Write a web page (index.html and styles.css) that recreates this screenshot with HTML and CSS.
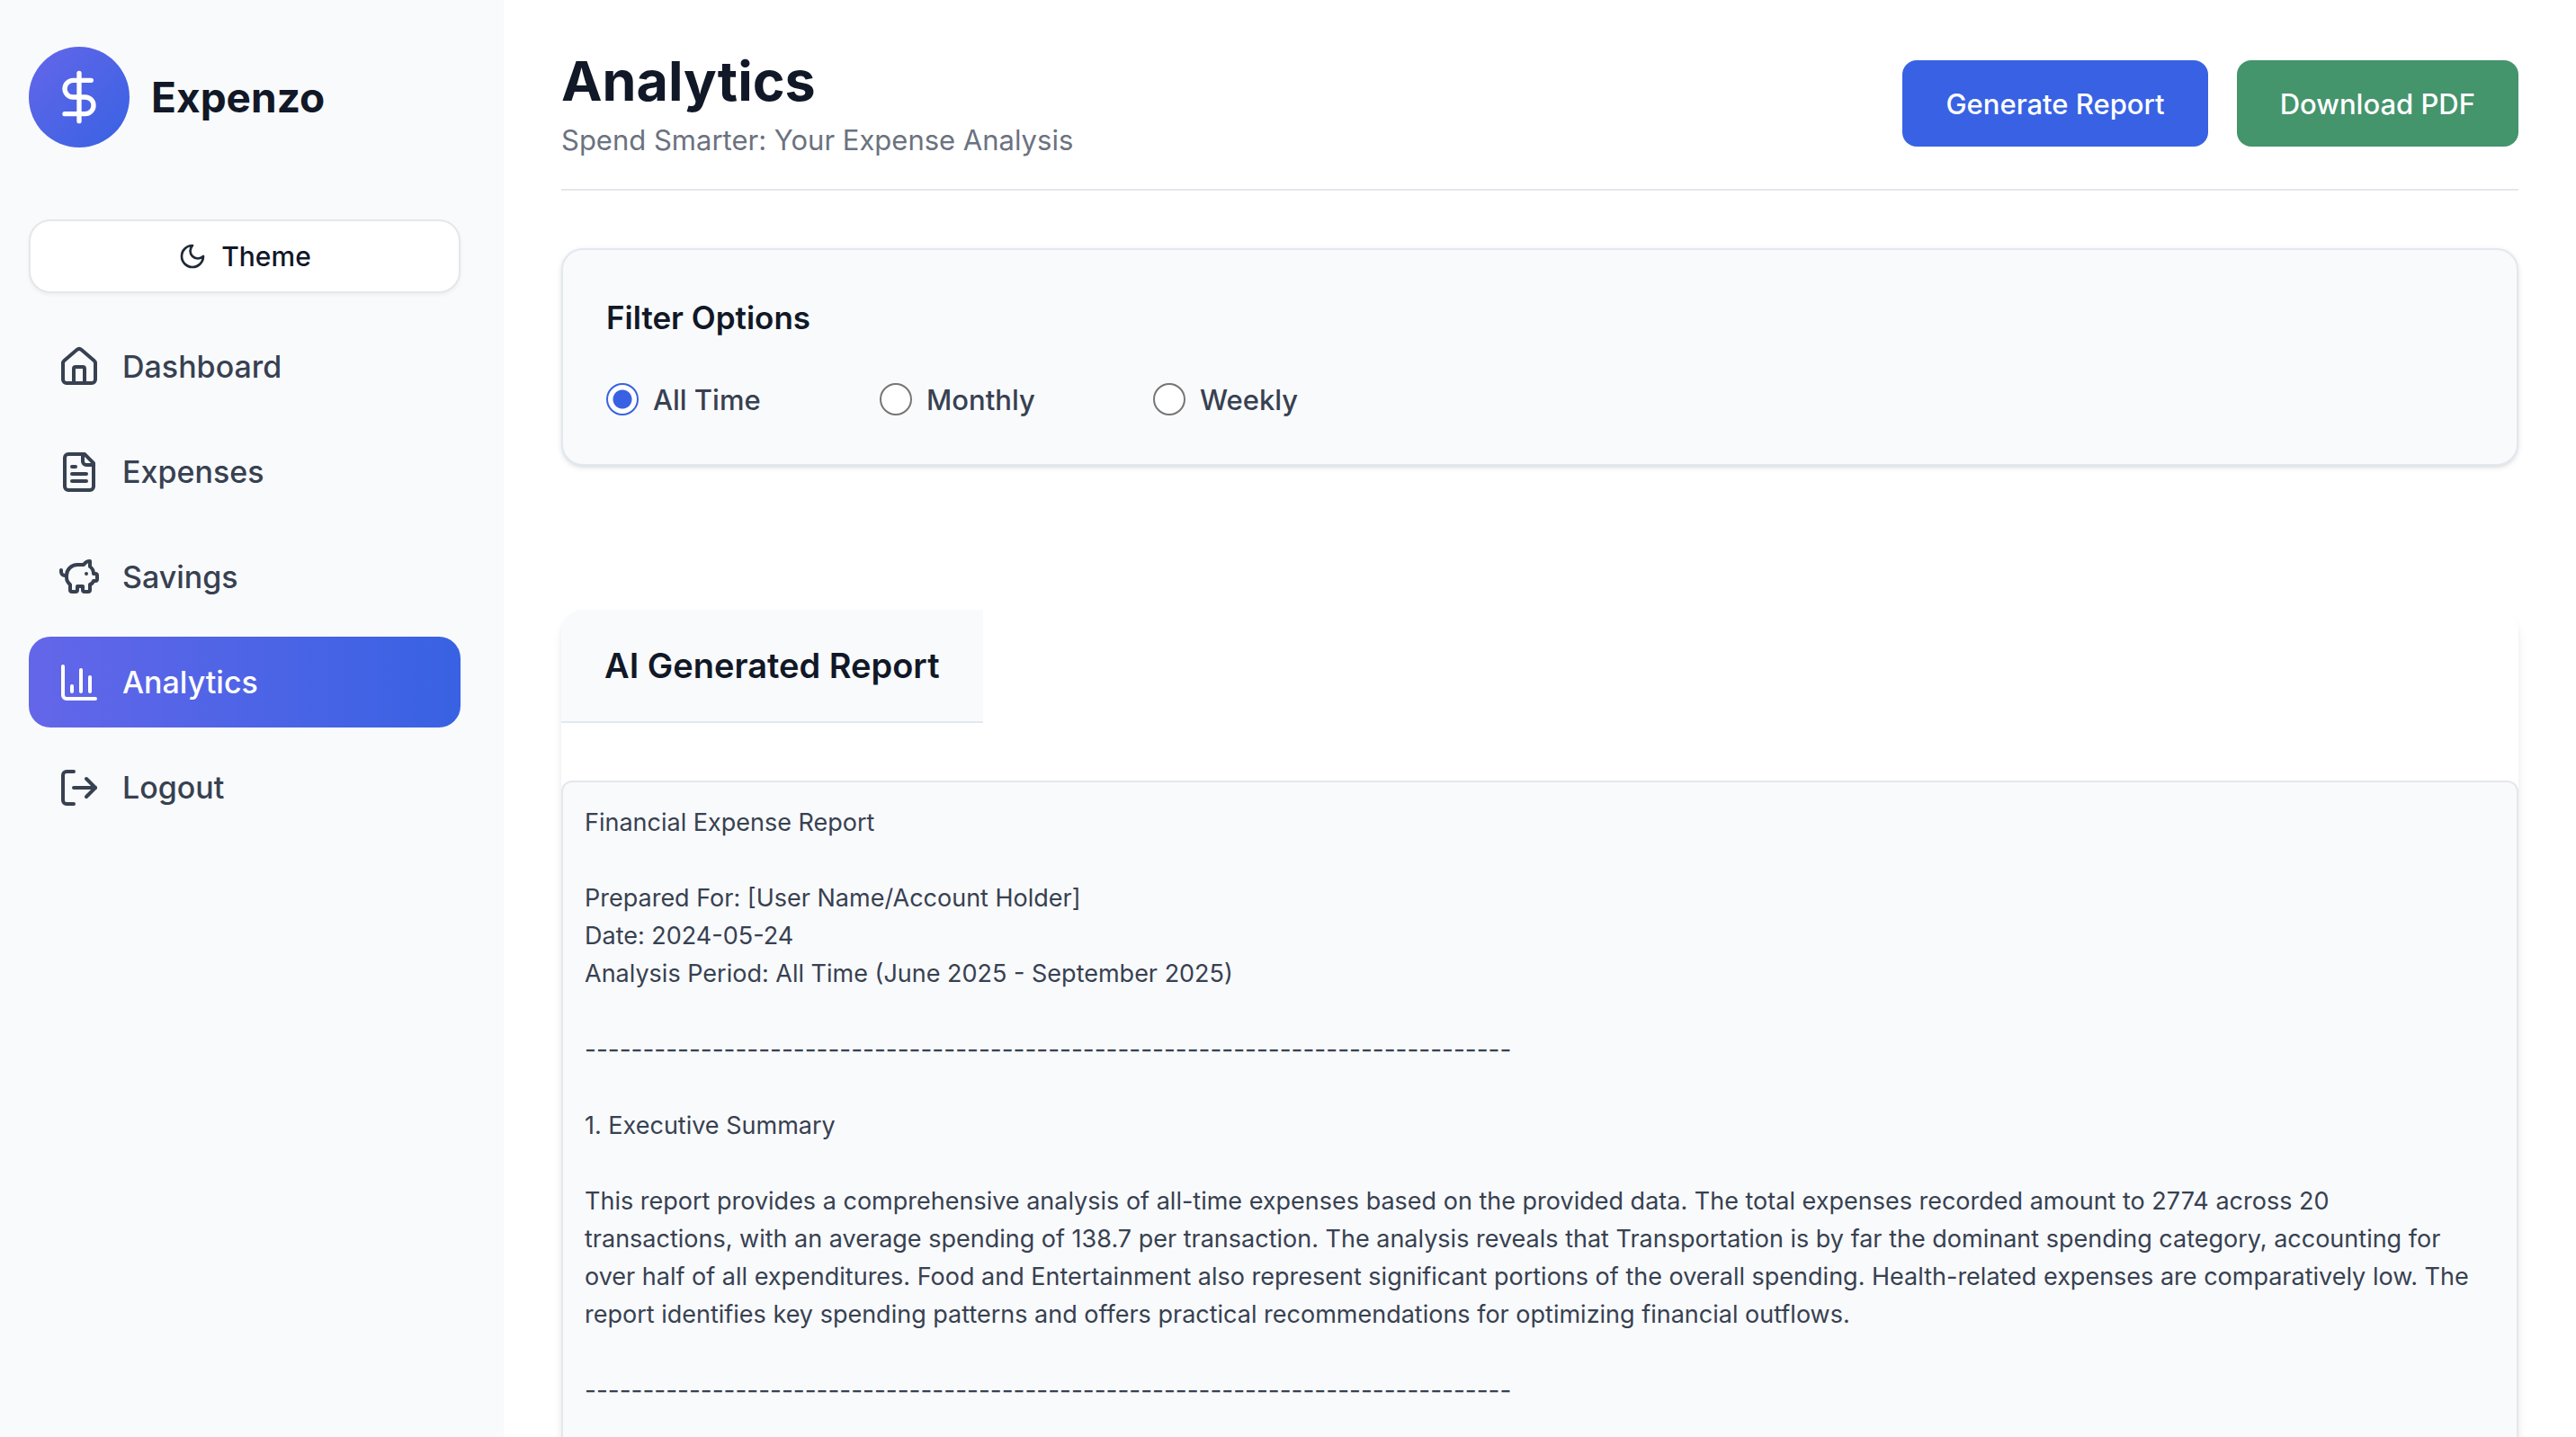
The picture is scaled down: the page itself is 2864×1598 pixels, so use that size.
FILE: index.html
```html
<!DOCTYPE html>
<html lang="en">
<head>
  <meta charset="utf-8">
  <meta name="viewport" content="width=device-width, initial-scale=1">
  <title>Expenzo</title>
  <link rel="stylesheet" href="styles.css">
</head>
<body>
  <div class="app">
    <aside class="sidebar">
      <div class="brand">
        <span class="brand-mark">
          <svg class="icon icon-lg" viewBox="0 0 24 24" aria-hidden="true"><path d="M12 2v20"/><path d="M17 5H9.5a3.5 3.5 0 0 0 0 7h5a3.5 3.5 0 0 1 0 7H6"/></svg>
        </span>
        <span class="brand-name">Expenzo</span>
      </div>

      <button class="theme-button" type="button">
        <svg class="icon icon-sm" viewBox="0 0 24 24" aria-hidden="true"><path d="M12 3a6 6 0 0 0 9 9 9 9 0 1 1-9-9Z"/></svg>
        <span>Theme</span>
      </button>

      <nav class="nav">
        <a class="nav-link" href="#dashboard">
          <svg class="icon" viewBox="0 0 24 24" aria-hidden="true"><path d="M15 21v-8a1 1 0 0 0-1-1h-4a1 1 0 0 0-1 1v8"/><path d="M3 10a2 2 0 0 1 .709-1.528l7-5.999a2 2 0 0 1 2.582 0l7 5.999A2 2 0 0 1 21 10v9a2 2 0 0 1-2 2H5a2 2 0 0 1-2-2z"/></svg>
          <span>Dashboard</span>
        </a>
        <a class="nav-link" href="#expenses">
          <svg class="icon" viewBox="0 0 24 24" aria-hidden="true"><path d="M15 2H6a2 2 0 0 0-2 2v16a2 2 0 0 0 2 2h12a2 2 0 0 0 2-2V7Z"/><path d="M14 2v4a2 2 0 0 0 2 2h4"/><path d="M10 9H8"/><path d="M16 13H8"/><path d="M16 17H8"/></svg>
          <span>Expenses</span>
        </a>
        <a class="nav-link" href="#savings">
          <svg class="icon" viewBox="0 0 24 24" aria-hidden="true"><path d="M11 17h3v2a1 1 0 0 0 1 1h2a1 1 0 0 0 1-1v-3a3.16 3.16 0 0 0 2-2h1a1 1 0 0 0 1-1v-2a1 1 0 0 0-1-1h-1a5 5 0 0 0-2-4V3a4 4 0 0 0-3.2 1.6l-.3.4H11a6 6 0 0 0-6 6v1a5 5 0 0 0 2 4v3a1 1 0 0 0 1 1h2a1 1 0 0 0 1-1z"/><path d="M16 10h.01"/><path d="M2 8v1a2 2 0 0 0 2 2h1"/></svg>
          <span>Savings</span>
        </a>
        <a class="nav-link active" href="#analytics" aria-current="page">
          <svg class="icon" viewBox="0 0 24 24" aria-hidden="true"><path d="M3 3v16a2 2 0 0 0 2 2h16"/><path d="M18 17V9"/><path d="M13 17V5"/><path d="M8 17v-3"/></svg>
          <span>Analytics</span>
        </a>
        <a class="nav-link" href="#logout">
          <svg class="icon" viewBox="0 0 24 24" aria-hidden="true"><path d="M9 21H5a2 2 0 0 1-2-2V5a2 2 0 0 1 2-2h4"/><path d="m16 17 5-5-5-5"/><path d="M21 12H9"/></svg>
          <span>Logout</span>
        </a>
      </nav>
    </aside>

    <main class="main">
      <header class="page-header">
        <div>
          <h1 class="page-title">Analytics</h1>
          <p class="page-subtitle">Spend Smarter: Your Expense Analysis</p>
        </div>
        <div class="actions">
          <button class="button button-primary" type="button">Generate Report</button>
          <button class="button button-success" type="button">Download PDF</button>
        </div>
      </header>

      <section class="filters">
        <h2 class="filters-title">Filter Options</h2>
        <div class="filters-row">
          <label class="option"><input class="radio" type="radio" name="range" value="all" checked><span>All Time</span></label>
          <label class="option"><input class="radio" type="radio" name="range" value="monthly"><span>Monthly</span></label>
          <label class="option"><input class="radio" type="radio" name="range" value="weekly"><span>Weekly</span></label>
        </div>
      </section>

      <section class="report">
        <h2 class="report-title">AI Generated Report</h2>
        <div class="report-body">Financial Expense Report

Prepared For: [User Name/Account Holder]
Date: 2024-05-24
Analysis Period: All Time (June 2025 - September 2025)

<span class="report-rule">--------------------------------------------------------------------------------</span>

1. Executive Summary

This report provides a comprehensive analysis of all-time expenses based on the provided data. The total expenses recorded amount to 2774 across 20 transactions, with an average spending of 138.7 per transaction. The analysis reveals that Transportation is by far the dominant spending category, accounting for over half of all expenditures. Food and Entertainment also represent significant portions of the overall spending. Health-related expenses are comparatively low. The report identifies key spending patterns and offers practical recommendations for optimizing financial outflows.

<span class="report-rule">--------------------------------------------------------------------------------</span></div>
      </section>
    </main>
  </div>
</body>
</html>
```

FILE: styles.css
```css
* {
  box-sizing: border-box;
}

body {
  margin: 0;
  background: #fff;
  color: #111827;
  font-family: Inter, "Liberation Sans", sans-serif;
  font-size: 32px;
}

h1,
h2,
p {
  margin: 0;
}

button {
  font-family: inherit;
  cursor: pointer;
}

.app {
  display: flex;
  height: 100vh;
  overflow: hidden;
}

.icon {
  flex: none;
  width: 48px;
  height: 48px;
  fill: none;
  stroke: currentColor;
  stroke-width: 2;
  stroke-linecap: round;
  stroke-linejoin: round;
}

.icon-sm {
  width: 32px;
  height: 32px;
}

.icon-lg {
  width: 64px;
  height: 64px;
}

/* Sidebar */

.sidebar {
  flex: none;
  display: flex;
  flex-direction: column;
  width: 560px;
  padding: 52px 48px 32px 32px;
  background: #f9fafc;
}

.brand {
  display: flex;
  align-items: center;
  gap: 24px;
  margin-bottom: 80px;
}

.brand-mark {
  display: grid;
  place-items: center;
  width: 112px;
  height: 112px;
  border-radius: 50%;
  background: linear-gradient(135deg, #6466e9, #3862e3);
  color: #fff;
}

.brand-name {
  font-size: 46px;
  font-weight: 700;
}

.theme-button {
  display: flex;
  align-items: center;
  justify-content: center;
  gap: 16px;
  height: 82px;
  margin-bottom: 31px;
  border: 2px solid #e5e7eb;
  border-radius: 24px;
  background: #fff;
  box-shadow: 0 2px 4px rgba(0, 0, 0, 0.05);
  color: #111827;
  font-size: 30px;
  font-weight: 500;
}

.theme-button .icon {
  color: #1f2937;
}

.nav {
  display: flex;
  flex-direction: column;
  gap: 16px;
}

.nav-link {
  display: flex;
  align-items: center;
  gap: 24px;
  height: 101px;
  padding: 0 32px;
  border-radius: 24px;
  color: #374151;
  font-size: 34px;
  font-weight: 500;
  text-decoration: none;
}

.nav-link.active {
  background: linear-gradient(90deg, #6466e9, #3862e3);
  color: #fff;
}

/* Main column */

.main {
  flex: 1;
  min-width: 0;
  padding: 50px 64px;
  overflow-y: auto;
  scrollbar-width: none;
}

.page-header {
  display: flex;
  align-items: center;
  justify-content: space-between;
  margin-bottom: 64px;
  padding-bottom: 30px;
  border-bottom: 2px solid #e5e7eb;
}

.page-title {
  font-size: 61px;
  font-weight: 700;
  line-height: 80px;
}

.page-subtitle {
  margin-top: 2px;
  color: #6b7280;
  font-size: 31px;
  line-height: 48px;
}

.actions {
  display: flex;
  gap: 32px;
}

.button {
  height: 96px;
  padding: 0 48px;
  border: 0;
  border-radius: 16px;
  color: #fff;
  font-size: 31px;
  font-weight: 500;
}

.button-primary {
  background: #3862e3;
}

.button-success {
  background: #44946c;
}

.filters {
  margin-bottom: 160px;
  padding: 48px;
  border: 2px solid #e2e8f0;
  border-radius: 24px;
  background: #f9fafc;
  box-shadow: 0 2px 6px rgba(0, 0, 0, 0.1), 0 2px 4px -2px rgba(0, 0, 0, 0.1);
}

.filters-title {
  margin-bottom: 40px;
  font-size: 35px;
  font-weight: 600;
  line-height: 54px;
}

.filters-row {
  display: flex;
}

.option {
  display: flex;
  align-items: center;
  gap: 16px;
  width: 304px;
  height: 48px;
  color: #374151;
  font-size: 31px;
  font-weight: 500;
}

.radio {
  appearance: none;
  width: 36px;
  height: 36px;
  margin: 0;
  border: 2px solid #767676;
  border-radius: 50%;
  background: #fff;
}

.radio:checked {
  border-color: #3862e3;
  background: radial-gradient(circle, #3862e3 10px, #fff 11px);
}

/* Report */

.report {
  border-radius: 24px 24px 0 0;
  box-shadow: 0 8px 12px -2px rgba(0, 0, 0, 0.1), 0 4px 8px -4px rgba(0, 0, 0, 0.1);
}

.report-title {
  width: fit-content;
  margin-bottom: 64px;
  padding: 34px 48px;
  border-bottom: 2px solid #e2e8f0;
  border-top-left-radius: 24px;
  background: #f9fafc;
  font-size: 38px;
  font-weight: 600;
  line-height: 56px;
}

.report-body {
  min-height: 100vh;
  padding: 24px 46px 24px 24px;
  border: 2px solid #e5e7eb;
  border-radius: 12px;
  background: #f9fafc;
  color: #374151;
  font-size: 27px;
  line-height: 42px;
  white-space: pre-wrap;
}

.report-rule {
  font-size: 28px;
}
```
